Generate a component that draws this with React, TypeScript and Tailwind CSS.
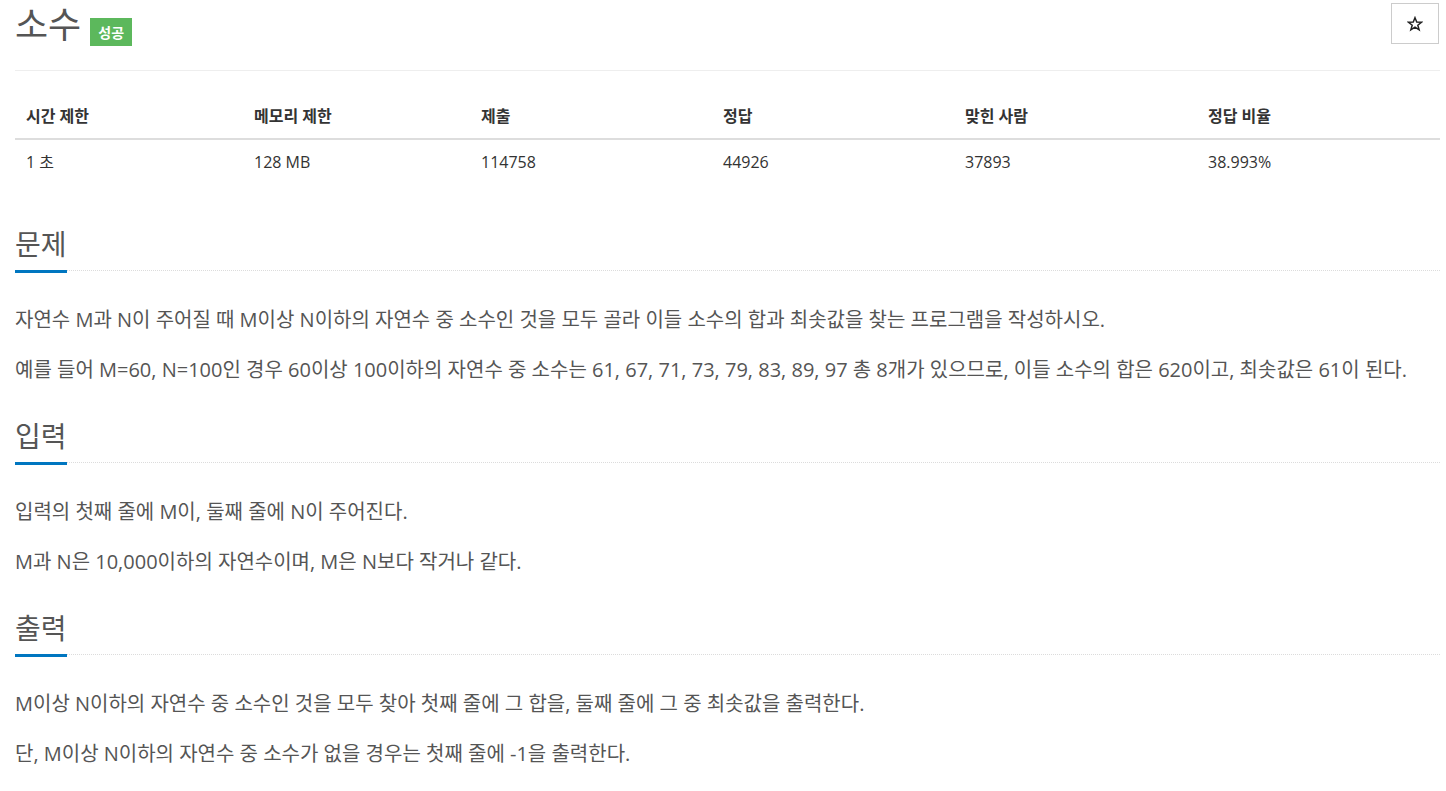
import React from "react";

const font = { fontFamily: '"Open Sans", "Noto Sans CJK KR", sans-serif' };

function Headline({ title }: { title: string }) {
  return (
    <div className="flex items-end border-b border-dotted border-[#dcdcdc]">
      <h2 className="text-[28px] leading-[32px] font-normal text-[#555] -mb-[3px]">
        <span className="inline-block pb-[10px] border-b-[3px] border-[#0076c0]">{title}</span>
      </h2>
    </div>
  );
}

function Section({ title, paras, first }: { title: string; paras: string[]; first?: boolean }) {
  return (
    <section className={first ? "mt-[46px]" : "mt-[35px]"}>
      <Headline title={title} />
      <div className="mt-[34px] flex flex-col gap-[20px] text-[20px] leading-[30px] text-[#555]">
        {paras.map((p, i) => (
          <p key={i}>{p}</p>
        ))}
      </div>
    </section>
  );
}

export default function App() {
  const cols = [
    { h: "시간 제한", v: "1 초", w: "w-[228px]" },
    { h: "메모리 제한", v: "128 MB", w: "w-[227px]" },
    { h: "제출", v: "114758", w: "w-[242px]" },
    { h: "정답", v: "44926", w: "w-[242px]" },
    { h: "맞힌 사람", v: "37893", w: "w-[243px]" },
    { h: "정답 비율", v: "38.993%", w: "w-[243px]" },
  ];
  return (
    <div className="bg-white min-h-[791px]" style={font}>
      <div className="ml-[15px] w-[1425px]">
        <div className="h-[71px] border-b border-[#eee] flex justify-between items-start">
          <div className="flex items-start pt-[5px]">
            <h1 className="text-[36px] leading-[40px] font-normal text-[#555]">소수</h1>
            <span className="ml-[9px] mt-[13px] h-[28px] w-[42px] bg-[#5cb85c] text-white text-[14px] font-bold flex items-center justify-center">
              성공
            </span>
          </div>
          <button className="mt-[3px] mr-[1px] h-[41px] w-[48px] border border-[#ccc] bg-white flex items-center justify-center">
            <svg width="16" height="16" viewBox="0 0 24 24" fill="none" stroke="#222" strokeWidth="2.2" strokeLinejoin="miter">
              <polygon points="12,2.5 14.6,9.2 21.8,9.4 16.2,13.9 18.2,20.8 12,16.8 5.8,20.8 7.8,13.9 2.2,9.4 9.4,9.2" />
            </svg>
          </button>
        </div>
        <table className="mt-[22px] w-full border-collapse text-[16px]">
          <thead>
            <tr className="border-b-2 border-[#ddd]">
              {cols.map((c) => (
                <th key={c.h} className={`${c.w} h-[46px] pl-[11px] text-left font-bold text-[#333]`}>
                  {c.h}
                </th>
              ))}
            </tr>
          </thead>
          <tbody>
            <tr>
              {cols.map((c) => (
                <td key={c.h} className="h-[43px] pl-[11px] pt-[1px] text-left text-[#333]">
                  {c.v}
                </td>
              ))}
            </tr>
          </tbody>
        </table>
        <Section
          first
          title="문제"
          paras={[
            "자연수 M과 N이 주어질 때 M이상 N이하의 자연수 중 소수인 것을 모두 골라 이들 소수의 합과 최솟값을 찾는 프로그램을 작성하시오.",
            "예를 들어 M=60, N=100인 경우 60이상 100이하의 자연수 중 소수는 61, 67, 71, 73, 79, 83, 89, 97 총 8개가 있으므로, 이들 소수의 합은 620이고, 최솟값은 61이 된다.",
          ]}
        />
        <Section
          title="입력"
          paras={["입력의 첫째 줄에 M이, 둘째 줄에 N이 주어진다.", "M과 N은 10,000이하의 자연수이며, M은 N보다 작거나 같다."]}
        />
        <Section
          title="출력"
          paras={[
            "M이상 N이하의 자연수 중 소수인 것을 모두 찾아 첫째 줄에 그 합을, 둘째 줄에 그 중 최솟값을 출력한다.",
            "단, M이상 N이하의 자연수 중 소수가 없을 경우는 첫째 줄에 -1을 출력한다.",
          ]}
        />
      </div>
    </div>
  );
}
